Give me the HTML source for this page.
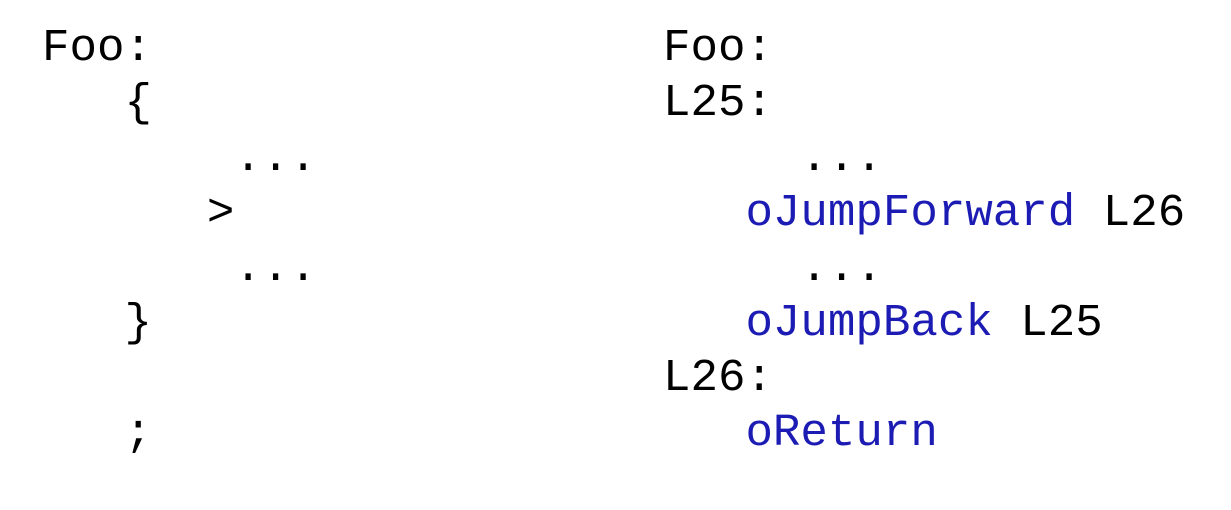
<!DOCTYPE html>
<html><head><meta charset="utf-8"><style>
html,body{margin:0;padding:0;background:#fff;width:1231px;height:510px;overflow:hidden}
pre{position:absolute;top:21px;margin:0;font-family:"Liberation Mono","Courier New",monospace;font-size:45.8px;line-height:55px;color:#000}
.b{color:#1c1cb4}
</style></head><body>
<pre style="left:42px">Foo:
   {
       ...
      &gt;
       ...
   }

   ;</pre>
<pre style="left:663px">Foo:
L25:
     ...
   <span class="b">oJumpForward</span> L26
     ...
   <span class="b">oJumpBack</span> L25
L26:
   <span class="b">oReturn</span></pre>
</body></html>
